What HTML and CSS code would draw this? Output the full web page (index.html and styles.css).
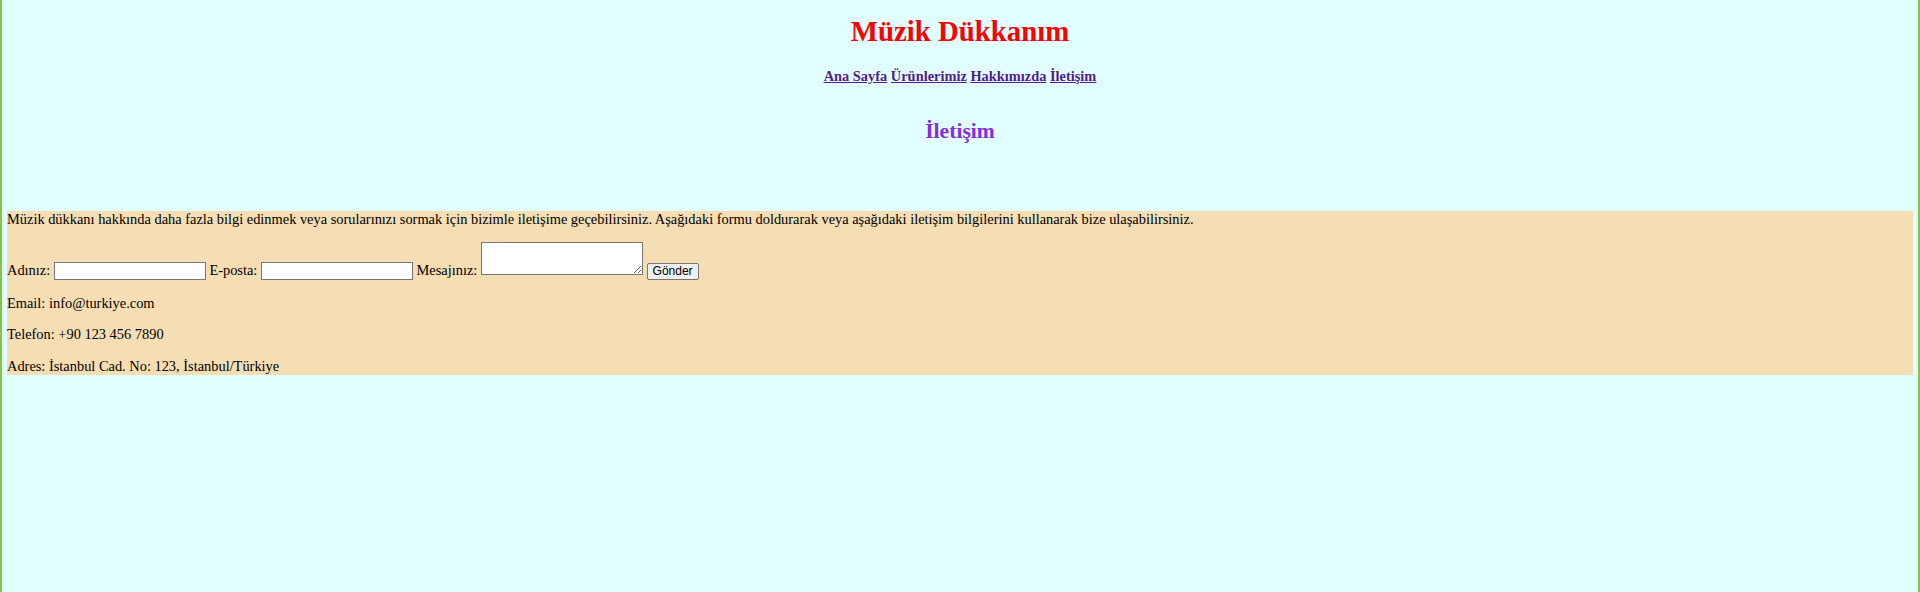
FILE: index.html
```html
<!DOCTYPE html>
<html lang="tr">
<head>
<meta charset="utf-8">
<title>İletişim - Müzik Dükkanım</title>
<link rel="stylesheet" href="styles.css">
</head>
<body class="page">
  <header class="site-header">
    <h1 class="site-title">Müzik Dükkanım</h1>
    <nav class="site-nav">
      <a href="#" class="nav-link">Ana Sayfa</a>
      <a href="#" class="nav-link">Ürünlerimiz</a>
      <a href="#" class="nav-link">Hakkımızda</a>
      <a href="#" class="nav-link">İletişim</a>
    </nav>
    <h2 class="page-title">İletişim</h2>
  </header>
  <section class="contact">
    <p class="intro">Müzik dükkanı hakkında daha fazla bilgi edinmek veya sorularınızı sormak için bizimle iletişime geçebilirsiniz. Aşağıdaki formu doldurarak veya aşağıdaki iletişim bilgilerini kullanarak bize ulaşabilirsiniz.</p>
    <form class="contact-form">
      <label class="field-label" for="ad">Adınız:</label> <input class="text-input" type="text" id="ad"> <label class="field-label" for="eposta">E-posta:</label> <input class="text-input" type="text" id="eposta"> <label class="field-label" for="mesaj">Mesajınız:</label> <textarea class="message-input" id="mesaj"></textarea> <button class="submit-btn" type="button">Gönder</button>
    </form>
    <p class="info">Email: info@turkiye.com</p>
    <p class="info">Telefon: +90 123 456 7890</p>
    <p class="info">Adres: İstanbul Cad. No: 123, İstanbul/Türkiye</p>
  </section>
</body>
</html>
```
FILE: styles.css
```css
html {
  background: #e0ffff;
}

.page {
  margin: 0;
  padding: 0 5px;
  min-height: 100vh;
  box-sizing: border-box;
  display: flow-root;
  border-left: 2px solid #8bc34a;
  border-right: 2px solid #8bc34a;
  background: #e0ffff;
  font-family: "Liberation Serif", "Times New Roman", serif;
  font-size: 14.4px;
  color: #000;
}

.site-header {
  text-align: center;
}

.site-title {
  margin: 15px 0 20px;
  font-size: 28.8px;
  font-weight: bold;
  color: #ff0000;
}

.site-nav {
  margin: 0;
  font-weight: bold;
  font-size: 14.4px;
}

.nav-link {
  color: #551a8b;
  text-decoration: underline;
}

.page-title {
  margin: 33.5px 0 0;
  font-size: 21.6px;
  font-weight: bold;
  color: #8a2be2;
}

.contact {
  margin-top: 67.5px;
  background: #f5deb3;
}

.intro,
.info {
  margin: 14.4px 0;
}

.contact-form {
  margin: 14.4px 0;
}

.text-input {
  box-sizing: border-box;
  width: 152px;
  height: 18px;
  padding: 1px 2px;
  border: 1px solid #767676;
  border-radius: 0;
  background: #fff;
  font-family: "Liberation Sans", Arial, sans-serif;
  font-size: 12px;
  margin: 0;
}

.message-input {
  box-sizing: border-box;
  width: 162px;
  height: 33px;
  padding: 2px;
  border: 1px solid #767676;
  background: #fff;
  font-family: "Liberation Mono", monospace;
  font-size: 12px;
  margin: 0;
  vertical-align: baseline;
}

.submit-btn {
  box-sizing: border-box;
  height: 17px;
  padding: 0 5px;
  border: 1px solid #767676;
  border-radius: 2px;
  background: #efefef;
  color: #000;
  font-family: "Liberation Sans", Arial, sans-serif;
  font-size: 12px;
  line-height: 15px;
  margin: 0;
}
```
